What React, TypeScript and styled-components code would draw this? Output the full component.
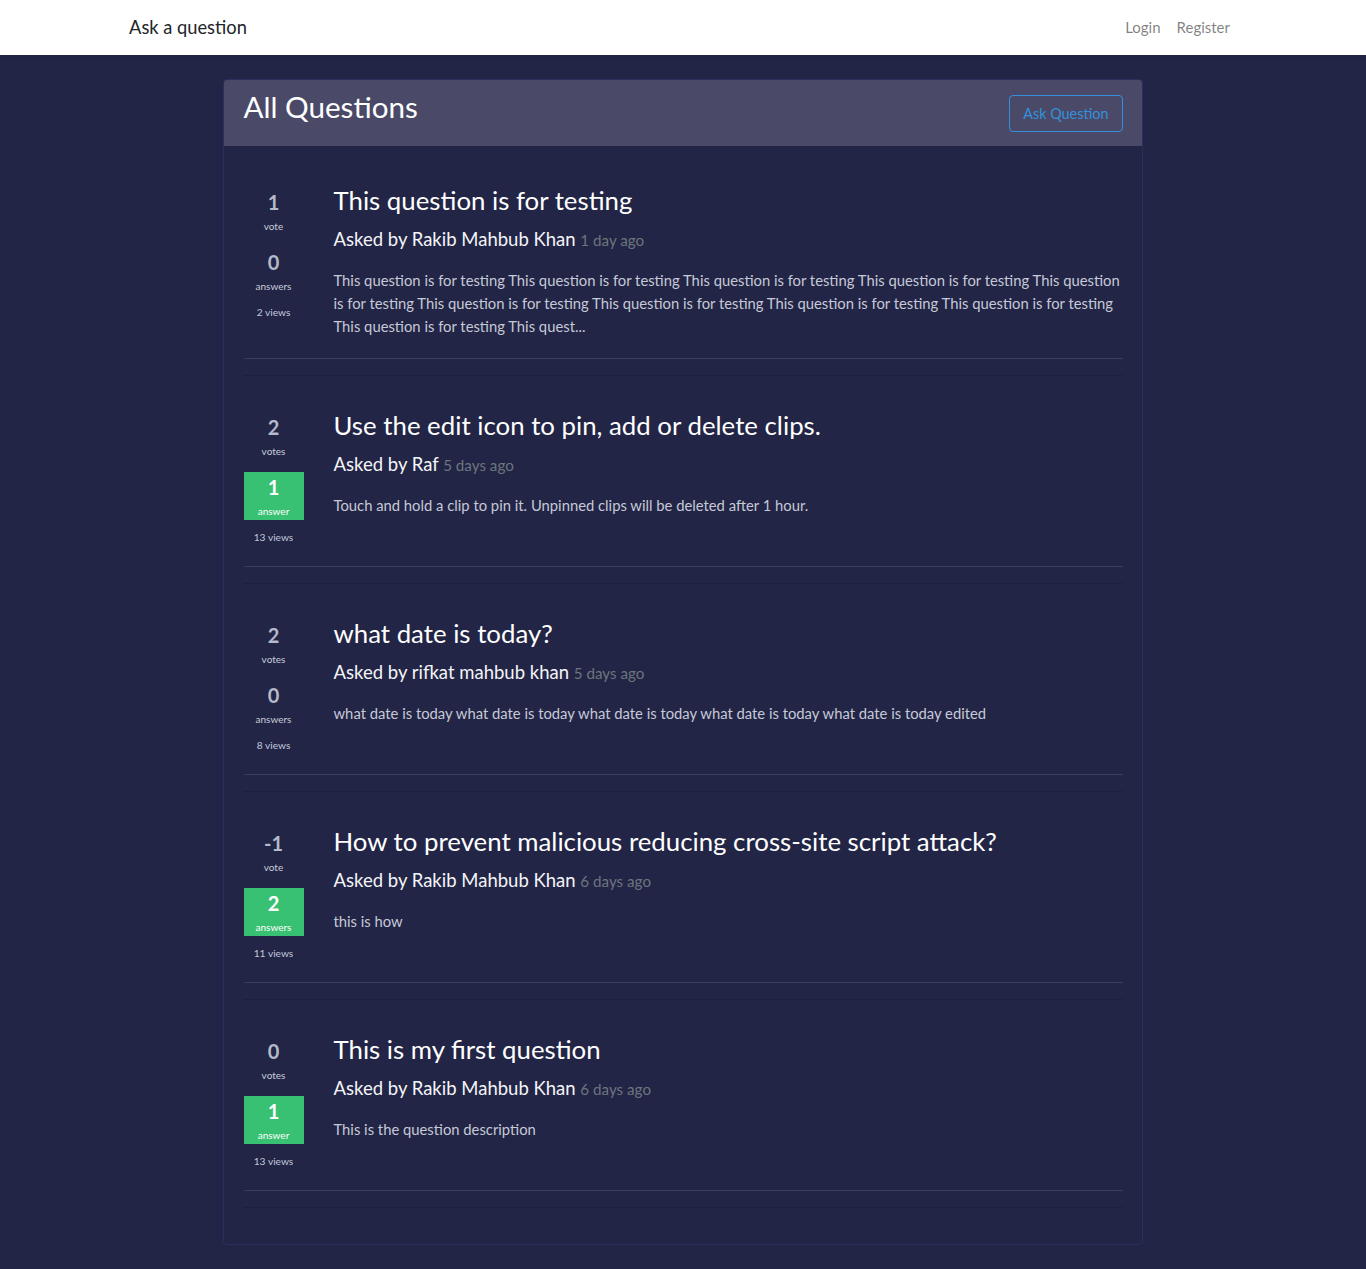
import React from "react";
import styled, { createGlobalStyle } from "styled-components";

const Global = createGlobalStyle`
  html, body { margin: 0; padding: 0; }
  body {
    background: #222545;
    font-family: "Lato", "Open Sans", "Liberation Sans", sans-serif;
    -webkit-font-smoothing: antialiased;
  }
  * { box-sizing: border-box; }
`;

const Navbar = styled.nav`
  height: 55px;
  background: #fff;
  box-shadow: 0 2px 4px rgba(0, 0, 0, 0.075);
`;

const NavInner = styled.div`
  width: 1140px;
  margin: 0 auto;
  padding: 0 15px;
  height: 100%;
  display: flex;
  align-items: center;
  justify-content: space-between;
`;

const Brand = styled.a`
  font-size: 18.3px;
  color: #212529;
  text-decoration: none;
  padding-bottom: 1px;
  margin-left: 1px;
`;

const NavLinks = styled.div`
  display: flex;
  margin-right: 8px;
  padding-bottom: 2px;
`;

const NavLink = styled.a`
  font-size: 15px;
  color: rgba(0, 0, 0, 0.5);
  text-decoration: none;
  padding: 0 0 0 16px;
`;

const Main = styled.main`
  padding: 24px 0 24px;
  display: flex;
  justify-content: center;
`;

const Card = styled.section`
  width: 920px;
  margin-left: -1px;
  border: 1px solid #2b2f5e;
  border-radius: 4px;
  background: #222545;
`;

const CardHeader = styled.header`
  height: 66px;
  background: #4a4a68;
  padding: 0 19px 0 20px;
  display: flex;
  align-items: center;
  justify-content: space-between;
  border-radius: 3px 3px 0 0;
`;

const HeaderTitle = styled.h2`
  margin: 0 0 13px;
  font-weight: 400;
  font-size: 29.6px;
  color: #fff;
`;

const OutlineButton = styled.button`
  font-family: inherit;
  font-size: 14.4px;
  color: #3490dc;
  background: transparent;
  border: 1px solid #3490dc;
  border-radius: 4px;
  height: 37px;
  padding: 0 13px;
  cursor: pointer;
`;

const CardBody = styled.div`
  padding: 21px 19px 20px 20px;
`;

const Item = styled.article`
  padding-top: 16px;
`;

const Row = styled.div`
  display: flex;
  gap: 30px;
  padding-bottom: 4px;
`;

const Stats = styled.div`
  width: 60px;
  flex-shrink: 0;
  padding-top: 4px;
  margin-bottom: 18px;
  display: flex;
  flex-direction: column;
  gap: 12px;
`;

const StatBox = styled.div<{ $green?: boolean }>`
  height: 48px;
  padding-top: 4px;
  display: flex;
  flex-direction: column;
  align-items: center;
  background: ${(p) => (p.$green ? "#38c172" : "transparent")};
`;

const StatNumber = styled.div<{ $green?: boolean }>`
  font-size: 20px;
  font-weight: 700;
  line-height: 22px;
  color: ${(p) => (p.$green ? "#fff" : "#b4b9cb")};
`;

const StatLabel = styled.div<{ $green?: boolean }>`
  font-size: 10px;
  line-height: 12px;
  margin-top: 7px;
  color: ${(p) => (p.$green ? "#fff" : "#c9ccda")};
`;

const Views = styled.div`
  font-size: 10.2px;
  line-height: 14px;
  margin-top: -2px;
  text-align: center;
  color: #c3c8de;
`;

const Content = styled.div`
  flex: 1;
  min-width: 0;
`;

const Title = styled.h3`
  margin: 0 0 10px;
  font-size: 25.8px;
  line-height: 34px;
  font-weight: 400;
  color: #fff;
`;

const Asked = styled.h5`
  margin: 0 0 17px;
  font-size: 18.5px;
  line-height: 24px;
  font-weight: 400;
  color: #f4f4f8;
`;

const Ago = styled.small`
  font-size: 15.2px;
  color: #6c757d;
`;

const Body = styled.p`
  margin: 0 0 16px;
  font-size: 14.8px;
  line-height: 23px;
  color: #c6c9d8;
`;

const LightRule = styled.hr`
  margin: 0;
  border: 0;
  border-top: 1px solid #3b3d5e;
`;

const DarkRule = styled.hr`
  margin: 16px 0;
  border: 0;
  border-top: 1px solid #1d203d;
`;

type Q = {
  votes: number;
  answers: number;
  views: number;
  title: string;
  author: string;
  ago: string;
  body: string;
};

const rep = "This question is for testing ";
const questions: Q[] = [
  {
    votes: 1,
    answers: 0,
    views: 2,
    title: "This question is for testing",
    author: "Rakib Mahbub Khan",
    ago: "1 day ago",
    body: rep.repeat(10) + "This quest...",
  },
  {
    votes: 2,
    answers: 1,
    views: 13,
    title: "Use the edit icon to pin, add or delete clips.",
    author: "Raf",
    ago: "5 days ago",
    body: "Touch and hold a clip to pin it. Unpinned clips will be deleted after 1 hour.",
  },
  {
    votes: 2,
    answers: 0,
    views: 8,
    title: "what date is today?",
    author: "rifkat mahbub khan",
    ago: "5 days ago",
    body: "what date is today what date is today what date is today what date is today what date is today edited",
  },
  {
    votes: -1,
    answers: 2,
    views: 11,
    title: "How to prevent malicious reducing cross-site script attack?",
    author: "Rakib Mahbub Khan",
    ago: "6 days ago",
    body: "this is how",
  },
  {
    votes: 0,
    answers: 1,
    views: 13,
    title: "This is my first question",
    author: "Rakib Mahbub Khan",
    ago: "6 days ago",
    body: "This is the question description",
  },
];

function QuestionItem({ q }: { q: Q }) {
  const answered = q.answers > 0;
  const voteWord = Math.abs(q.votes) === 1 ? "vote" : "votes";
  const ansWord = q.answers === 1 ? "answer" : "answers";
  return (
    <Item>
      <Row>
        <Stats>
          <StatBox>
            <StatNumber>{q.votes}</StatNumber>
            <StatLabel>{voteWord}</StatLabel>
          </StatBox>
          <StatBox $green={answered}>
            <StatNumber $green={answered}>{q.answers}</StatNumber>
            <StatLabel $green={answered}>{ansWord}</StatLabel>
          </StatBox>
          <Views>{q.views} views</Views>
        </Stats>
        <Content>
          <Title>{q.title}</Title>
          <Asked>
            Asked by {q.author} <Ago>{q.ago}</Ago>
          </Asked>
          <Body>{q.body}</Body>
        </Content>
      </Row>
      <LightRule />
      <DarkRule />
    </Item>
  );
}

export default function App() {
  return (
    <>
      <Global />
      <Navbar>
        <NavInner>
          <Brand href="#">Ask a question</Brand>
          <NavLinks>
            <NavLink href="#">Login</NavLink>
            <NavLink href="#">Register</NavLink>
          </NavLinks>
        </NavInner>
      </Navbar>
      <Main>
        <Card>
          <CardHeader>
            <HeaderTitle>All Questions</HeaderTitle>
            <OutlineButton>Ask Question</OutlineButton>
          </CardHeader>
          <CardBody>
            {questions.map((q, i) => (
              <QuestionItem key={i} q={q} />
            ))}
          </CardBody>
        </Card>
      </Main>
    </>
  );
}
